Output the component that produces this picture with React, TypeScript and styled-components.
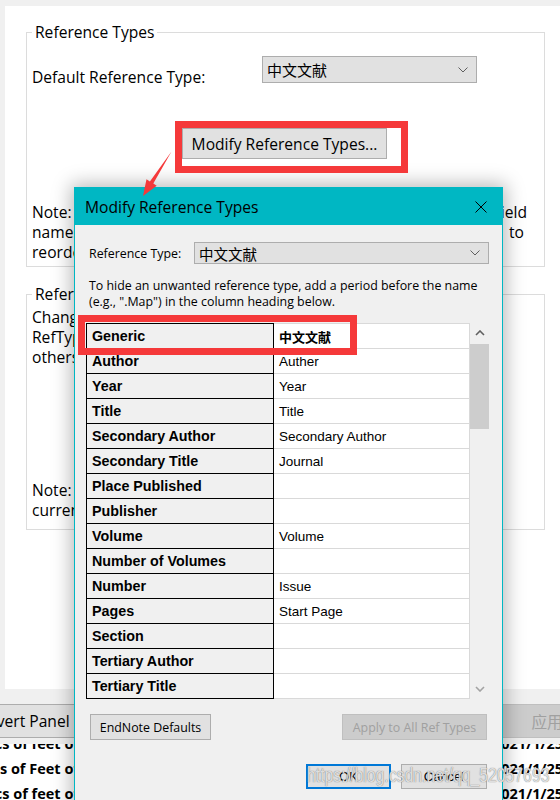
import React from "react";
import styled, { createGlobalStyle } from "styled-components";

const UI = `"Open Sans", "Noto Sans CJK SC", sans-serif`;
const CLASSIC = `"Liberation Sans", Arial, "Noto Sans CJK SC", sans-serif`;
const RED = "#f5393a";
const TEAL = "#00b7c3";
const BIG = 15.6;
const SMALL = 12.4;

const GlobalStyle = createGlobalStyle`
  html, body { margin: 0; padding: 0; background: #f0f0f0; }
  body { font-family: ${UI}; color: #000; }
  * { box-sizing: border-box; }
`;

const Screen = styled.div`
  position: relative;
  width: 560px;
  height: 800px;
  overflow: hidden;
  background: #f0f0f0;
  display: flex;
  flex-direction: column;
`;

/* ---------- background preferences window ---------- */

const PrefPanel = styled.div`
  margin: 6px 0 0 5px;
  height: 683px;
  flex: none;
  background: #fff;
  padding: 16px 0 0 21px;
  display: flex;
  flex-direction: column;
  gap: 17px;
`;

const Group = styled.fieldset<{ $h: number }>`
  margin: 0;
  min-width: 0;
  width: 519px;
  height: ${(p) => p.$h}px;
  border: 1px solid #dcdcdc;
  padding: 0 16px 0 5px;
  font-size: ${BIG}px;
  line-height: 20px;
`;

const Legend = styled.legend`
  padding: 0 3px;
  font-size: ${BIG}px;
  line-height: 20px;
  white-space: nowrap;
`;

const DefaultRow = styled.div`
  margin-top: 14px;
  height: 27px;
  display: grid;
  grid-template-columns: 230px 215px;
  align-items: start;
`;

const FieldLabel = styled.div`
  padding-top: 11px;
  white-space: nowrap;
`;

const Select = styled.div<{ $h: number; $size: number }>`
  height: ${(p) => p.$h}px;
  background: #e1e1e1;
  border: 1px solid #adadad;
  display: flex;
  align-items: center;
  justify-content: space-between;
  padding: 0 8px 0 4px;
  font-size: ${(p) => p.$size}px;
  font-family: ${UI};
  white-space: nowrap;
`;

const ModifyRow = styled.div`
  margin-top: 45px;
  padding-left: 150px;
  display: flex;
`;

const WinButton = styled.div<{ $w: number; $h: number }>`
  width: ${(p) => p.$w}px;
  height: ${(p) => p.$h}px;
  flex: none;
  background: #e1e1e1;
  border: 1px solid #adadad;
  display: flex;
  align-items: center;
  justify-content: center;
  white-space: nowrap;
`;

const Para = styled.div<{ $top: number }>`
  margin-top: ${(p) => p.$top}px;
`;

const Line = styled.div<{ $inset?: number; $justify?: boolean }>`
  height: 20px;
  overflow: hidden;
  margin-right: ${(p) => p.$inset ?? 0}px;
  white-space: ${(p) => (p.$justify ? "normal" : "nowrap")};
  text-align: ${(p) => (p.$justify ? "justify" : "left")};
  text-align-last: ${(p) => (p.$justify ? "justify" : "auto")};
`;

const BottomBar = styled.div`
  height: 55px;
  flex: none;
  padding-top: 15px;
  display: flex;
  align-items: flex-start;
  font-size: ${BIG}px;
`;

const BarButton = styled.div<{ $w: number; $disabled?: boolean }>`
  width: ${(p) => p.$w}px;
  height: 34px;
  flex: none;
  background: ${(p) => (p.$disabled ? "#cccccc" : "#e1e1e1")};
  color: ${(p) => (p.$disabled ? "#a0a0a0" : "#000")};
  border: 1px solid ${(p) => (p.$disabled ? "#bfbfbf" : "#adadad")};
  display: flex;
  align-items: center;
  justify-content: center;
  white-space: nowrap;
`;

const LeftBarButton = styled(BarButton)`
  margin-left: -28px;
`;

const RightBarButton = styled(BarButton)`
  margin-left: auto;
  margin-right: -37px;
`;

const ListArea = styled.div`
  flex: 1;
  background: #fff;
  overflow: hidden;
`;

const ListInner = styled.div`
  margin-top: -13px;
`;

const ListRow = styled.div`
  height: 25px;
  display: flex;
  align-items: center;
  font-weight: 700;
  font-size: 14.5px;
  white-space: nowrap;
`;

const TitleCell = styled.div`
  width: 79px;
  overflow: hidden;
  display: flex;
  justify-content: flex-end;
  flex: none;
`;

const DateCell = styled.div`
  margin-left: 414px;
  flex: none;
`;

/* ---------- dialog ---------- */

const Dialog = styled.div`
  position: absolute;
  left: 74px;
  top: 187px;
  width: 429px;
  height: 640px;
  border: 1px solid ${TEAL};
  background: #f0f0f0;
  box-shadow: 0 0 18px 3px rgba(0, 0, 0, 0.28);
  display: flex;
  flex-direction: column;
`;

const TitleBar = styled.div`
  height: 37px;
  flex: none;
  background: ${TEAL};
  display: flex;
  align-items: center;
  justify-content: space-between;
  padding: 0 15px 0 10px;
  font-size: ${BIG}px;
`;

const DialogBody = styled.div`
  padding: 17px 13px 0 11px;
  display: flex;
  flex-direction: column;
  font-size: ${SMALL}px;
`;

const TypeRow = styled.div`
  display: grid;
  grid-template-columns: 108px 1fr;
  align-items: center;
`;

const SmallLabel = styled.div`
  padding-left: 3px;
  white-space: nowrap;
`;

const Hint = styled.div`
  margin: 14px 0 0 3px;
  line-height: 16px;
  white-space: nowrap;
`;

const TableArea = styled.div`
  margin-top: 13px;
  height: 376px;
  display: flex;
`;

const Grid = styled.div`
  width: 384px;
  display: flex;
  flex-direction: column;
`;

const GridRow = styled.div`
  height: 25px;
  display: flex;
  font-family: ${CLASSIC};
  &:first-child {
    height: 26px;
  }
  &:first-child > div {
    border-top-width: 1px;
    border-top-style: solid;
  }
`;

const NameCell = styled.div`
  width: 188px;
  flex: none;
  background: #f0f0f0;
  border-left: 1px solid #000;
  border-right: 1px solid #000;
  border-bottom: 1px solid #000;
  border-top-color: #000;
  font-weight: 700;
  font-size: 14.3px;
  display: flex;
  align-items: center;
  padding-left: 5px;
  white-space: nowrap;
`;

const ValueCell = styled.div<{ $strong?: boolean }>`
  flex: 1;
  background: #fff;
  border-right: 1px solid #d9d9d9;
  border-bottom: 1px solid #d9d9d9;
  border-top-color: #d9d9d9;
  display: flex;
  align-items: center;
  padding-left: 5px;
  font-size: ${(p) => (p.$strong ? 13 : 13.5)}px;
  font-weight: ${(p) => (p.$strong ? 700 : 400)};
  white-space: nowrap;
`;

const Scrollbar = styled.div`
  width: 19px;
  flex: none;
  display: flex;
  flex-direction: column;
`;

const ScrollArrow = styled.div`
  height: 20px;
  display: flex;
  align-items: center;
  justify-content: center;
  flex: none;
`;

const ScrollThumb = styled.div`
  margin-top: 1px;
  height: 85px;
  background: #cdcdcd;
  flex: none;
`;

const ScrollTrack = styled.div`
  flex: 1;
`;

const ButtonRow = styled.div<{ $top: number; $end?: boolean }>`
  margin-top: ${(p) => p.$top}px;
  display: flex;
  justify-content: ${(p) => (p.$end ? "flex-end" : "space-between")};
  gap: 10px;
  padding: 0 2px 0 4px;
`;

const DlgButton = styled.div<{ $w: number; $h: number; $disabled?: boolean; $default?: boolean; $classic?: boolean }>`
  width: ${(p) => p.$w}px;
  height: ${(p) => p.$h}px;
  flex: none;
  background: ${(p) => (p.$disabled ? "#cccccc" : "#e1e1e1")};
  color: ${(p) => (p.$disabled ? "#a0a0a0" : "#000")};
  border: ${(p) => (p.$default ? `2px solid #0078d7` : p.$disabled ? "1px solid #bfbfbf" : "1px solid #adadad")};
  display: flex;
  align-items: center;
  justify-content: center;
  white-space: nowrap;
  font-family: ${(p) => (p.$classic ? CLASSIC : UI)};
  font-size: ${(p) => (p.$classic ? 13 : SMALL)}px;
`;

/* ---------- annotations ---------- */

const RedBox = styled.div<{ $x: number; $y: number; $w: number; $h: number }>`
  position: absolute;
  left: ${(p) => p.$x}px;
  top: ${(p) => p.$y}px;
  width: ${(p) => p.$w}px;
  height: ${(p) => p.$h}px;
  border: 7px solid ${RED};
  pointer-events: none;
`;

const ArrowSvg = styled.svg`
  position: absolute;
  left: 138px;
  top: 148px;
`;

const Watermark = styled.div`
  position: absolute;
  left: 307px;
  top: 765px;
  font-family: ${CLASSIC};
  font-size: 20px;
  line-height: 20px;
  white-space: nowrap;
  transform: scaleX(0.79);
  transform-origin: left center;
  color: rgba(255, 255, 255, 0.75);
  text-shadow: 0 0 1px rgba(110, 110, 110, 0.7), 0 0 1px rgba(110, 110, 110, 0.7);
  pointer-events: none;
`;

const Chevron = ({ color = "#5f5f5f" }: { color?: string }) => (
  <svg width="10" height="6" viewBox="0 0 10 6">
    <polyline points="0.5,0.5 5,5 9.5,0.5" fill="none" stroke={color} strokeWidth="1" />
  </svg>
);

const ScrollChevron = ({ up, color }: { up?: boolean; color: string }) => (
  <svg width="10" height="6" viewBox="0 0 10 6">
    <polyline
      points={up ? "1,5 5,1 9,5" : "1,1 5,5 9,1"}
      fill="none"
      stroke={color}
      strokeWidth="1.6"
    />
  </svg>
);

const CloseIcon = () => (
  <svg width="12" height="12" viewBox="0 0 12 12">
    <path d="M0.5 0.5 L11.5 11.5 M11.5 0.5 L0.5 11.5" stroke="#000" strokeWidth="1" />
  </svg>
);

const fields: [string, string][] = [
  ["Generic", "中文文献"],
  ["Author", "Auther"],
  ["Year", "Year"],
  ["Title", "Title"],
  ["Secondary Author", "Secondary Author"],
  ["Secondary Title", "Journal"],
  ["Place Published", ""],
  ["Publisher", ""],
  ["Volume", "Volume"],
  ["Number of Volumes", ""],
  ["Number", "Issue"],
  ["Pages", "Start Page"],
  ["Section", ""],
  ["Tertiary Author", ""],
  ["Tertiary Title", ""],
];

const libraryRows = [
  ["Biomechanics of feet of", "2021/1/25"],
  ["Kinematics of Feet of", "2021/1/25"],
  ["Characteristics of feet of", "2021/1/25"],
];

export default function App() {
  return (
    <>
      <GlobalStyle />
      <Screen>
        <PrefPanel>
          <Group $h={245}>
            <Legend>Reference Types</Legend>
            <DefaultRow>
              <FieldLabel>Default Reference Type:</FieldLabel>
              <Select $h={27} $size={15}>
                <span>中文文献</span>
                <Chevron />
              </Select>
            </DefaultRow>
            <ModifyRow>
              <WinButton $w={205} $h={31}>Modify Reference Types...</WinButton>
            </ModifyRow>
            <Para $top={43}>
              <Line $justify $inset={1}>
                Note: Changes apply to every library. Rename types or field
              </Line>
              <Line $justify $inset={4}>
                names in this dialog. Drag fields up or down to
              </Line>
              <Line>reorder them.</Line>
            </Para>
          </Group>
          <Group $h={246}>
            <Legend>Reference Type Table</Legend>
            <Para $top={3}>
              <Line>Changes made to the reference types can be</Line>
              <Line>RefTypes table exported and shared with</Line>
              <Line>others using the Export button.</Line>
            </Para>
            <Para $top={113}>
              <Line>Note: Importing a table replaces the</Line>
              <Line>current reference types.</Line>
            </Para>
          </Group>
        </PrefPanel>

        <BottomBar>
          <LeftBarButton $w={104}>Revert Panel</LeftBarButton>
          <RightBarButton $w={100} $disabled>应用</RightBarButton>
        </BottomBar>

        <ListArea>
          <ListInner>
            {libraryRows.map(([t, d], i) => (
              <ListRow key={i}>
                <TitleCell>
                  <span>{t}</span>
                </TitleCell>
                <DateCell>{d}</DateCell>
              </ListRow>
            ))}
          </ListInner>
        </ListArea>

        <Dialog>
          <TitleBar>
            <span>Modify Reference Types</span>
            <CloseIcon />
          </TitleBar>
          <DialogBody>
            <TypeRow>
              <SmallLabel>Reference Type:</SmallLabel>
              <Select $h={22} $size={14.5}>
                <span>中文文献</span>
                <Chevron />
              </Select>
            </TypeRow>
            <Hint>
              To hide an unwanted reference type, add a period before the name
              <br />
              (e.g., ".Map") in the column heading below.
            </Hint>
            <TableArea>
              <Grid>
                {fields.map(([name, value], i) => (
                  <GridRow key={name}>
                    <NameCell>{name}</NameCell>
                    <ValueCell $strong={i === 0}>{value}</ValueCell>
                  </GridRow>
                ))}
              </Grid>
              <Scrollbar>
                <ScrollArrow>
                  <ScrollChevron up color="#606060" />
                </ScrollArrow>
                <ScrollThumb />
                <ScrollTrack />
                <ScrollArrow>
                  <ScrollChevron color="#a3a3a3" />
                </ScrollArrow>
              </Scrollbar>
            </TableArea>
            <ButtonRow $top={15}>
              <DlgButton $w={121} $h={26}>EndNote Defaults</DlgButton>
              <DlgButton $w={145} $h={26} $disabled>
                Apply to All Ref Types
              </DlgButton>
            </ButtonRow>
            <ButtonRow $top={24} $end>
              <DlgButton $w={85} $h={25} $default $classic>
                OK
              </DlgButton>
              <DlgButton $w={86} $h={25} $classic>
                Cancel
              </DlgButton>
            </ButtonRow>
          </DialogBody>
        </Dialog>

        <RedBox $x={175} $y={121} $w={233} $h={52} />
        <RedBox $x={78} $y={315} $w={279} $h={40} />
        <ArrowSvg width="38" height="52" viewBox="0 0 38 52">
          <polygon
            points="33.5,3.5 15.3,35.6 18.7,37.7 5,48 8.5,31.3 11.9,33.4"
            fill={RED}
          />
        </ArrowSvg>
        <Watermark>https://blog.csdn.net/qq_52057693</Watermark>
      </Screen>
    </>
  );
}
